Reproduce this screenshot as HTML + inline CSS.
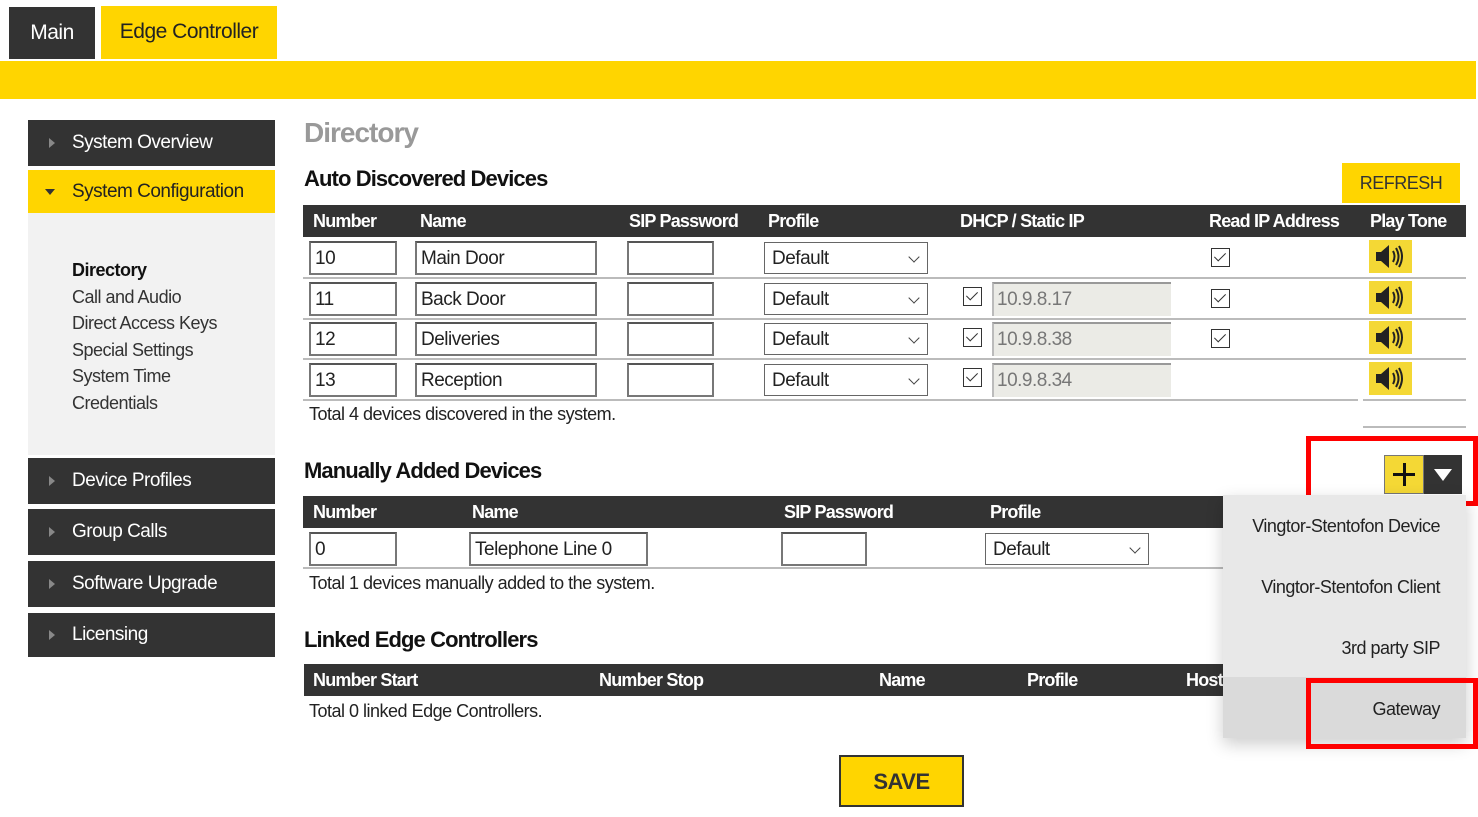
<!DOCTYPE html>
<html><head><meta charset="utf-8"><style>
*{margin:0;padding:0;box-sizing:border-box}
body{width:1478px;height:817px;background:#fff;position:relative;overflow:hidden;font-family:"Liberation Sans Narrow","Liberation Sans",sans-serif;color:#222;letter-spacing:-0.5px}
.a{position:absolute;white-space:nowrap}
.dk{background:#333;color:#fff}
.yl{background:#ffd500}
.nav{position:absolute;left:28px;width:247px;font-size:19px;padding-left:44px;display:flex;align-items:center}
.nav .tri{position:absolute;left:21px;top:50%;margin-top:-5px;border-left:6px solid #888;border-top:5px solid transparent;border-bottom:5px solid transparent}
.th{position:absolute;height:32px;background:#333;color:#fff;font-weight:bold;font-size:18px;letter-spacing:-0.8px}
.th span{position:absolute;top:6px}
.in{position:absolute;border:2px solid #777;border-top-color:#555;background:#fff;font-size:19px;padding-left:4px;line-height:31px;height:34px}
.sel{position:absolute;border:1px solid #666;height:32px;font-size:19px;padding-left:7px;line-height:32px;background:#fff}
.sel:after{content:"";position:absolute;right:9px;top:10px;width:7px;height:7px;border-right:1.5px solid #444;border-bottom:1.5px solid #444;transform:rotate(45deg)}
.cb{position:absolute;width:19px;height:19px;border:1.5px solid #333;background:#fff}
.cb:after{content:"";position:absolute;left:5px;top:1px;width:5px;height:10px;border-right:1.5px solid #333;border-bottom:1.5px solid #333;transform:rotate(45deg)}
.ip{position:absolute;width:179px;height:34px;background:#ebebe6;border-top:2px solid #999;border-left:2px solid #bbb;color:#777;font-size:19px;padding-left:3px;line-height:32px}
.sp{position:absolute;left:1369px;width:43px;height:33px;background:#f4d835}
.hl{position:absolute;height:2px;background:#bbb}
.txt{font-size:18px}
.h2{font-size:22px;font-weight:bold;color:#111;letter-spacing:-0.9px}
</style></head><body>
<div class="a dk" style="left:9px;top:7px;width:86px;height:52px;font-size:21px;text-align:center;line-height:52px">Main</div>
<div class="a yl" style="left:101px;top:6px;width:176px;height:53px;font-size:21px;text-align:center;line-height:52px">Edge Controller</div>
<div class="a yl" style="left:0;top:61px;width:1476px;height:38px"></div>

<div class="nav dk" style="top:120px;height:46px"><i class="tri"></i>System Overview</div>
<div class="nav yl" style="top:170px;height:43px"><i class="tri" style="border-left:5px solid transparent;border-right:5px solid transparent;border-top:6px solid #333;border-bottom:0;margin-top:-3px;left:17px"></i>System Configuration</div>
<div class="a" style="left:28px;top:213px;width:247px;height:242px;background:#f2f2f2"></div>
<div class="a" style="left:72px;top:257px;font-size:18px;line-height:26.5px;color:#333"><b style="color:#111">Directory</b><br>Call and Audio<br>Direct Access Keys<br>Special Settings<br>System Time<br>Credentials</div>
<div class="nav dk" style="top:458px;height:46px"><i class="tri"></i>Device Profiles</div>
<div class="nav dk" style="top:509px;height:46px"><i class="tri"></i>Group Calls</div>
<div class="nav dk" style="top:561px;height:46px"><i class="tri"></i>Software Upgrade</div>
<div class="nav dk" style="top:613px;height:44px"><i class="tri"></i>Licensing</div>

<div class="a" style="left:304px;top:117px;font-size:28px;font-weight:bold;color:#999;letter-spacing:-1px">Directory</div>
<div class="a h2" style="left:304px;top:166px">Auto Discovered Devices</div>
<div class="a yl" style="left:1342px;top:163px;width:118px;height:40px;font-size:18px;text-align:center;line-height:41px;color:#333">REFRESH</div>

<div class="th" style="left:303px;top:205px;width:1163px"><span style="left:10px">Number</span><span style="left:117px">Name</span><span style="left:326px">SIP Password</span><span style="left:465px">Profile</span><span style="left:657px">DHCP / Static IP</span><span style="left:906px">Read IP Address</span><span style="left:1067px">Play Tone</span></div>

<div class="in" style="left:309px;top:241px;width:88px">10</div><div class="in" style="left:415px;top:241px;width:182px">Main Door</div><div class="in" style="left:627px;top:241px;width:87px"></div><div class="sel" style="left:764px;top:242px;width:164px">Default</div><div class="cb" style="left:1211px;top:248px"></div>
<div class="hl" style="left:303px;top:277px;width:1163px"></div>
<div class="in" style="left:309px;top:282px;width:88px">11</div><div class="in" style="left:415px;top:282px;width:182px">Back Door</div><div class="in" style="left:627px;top:282px;width:87px"></div><div class="sel" style="left:764px;top:283px;width:164px">Default</div><div class="cb" style="left:963px;top:287px"></div><div class="ip" style="left:992px;top:282px">10.9.8.17</div><div class="cb" style="left:1211px;top:289px"></div>
<div class="hl" style="left:303px;top:318px;width:1163px"></div>
<div class="in" style="left:309px;top:322px;width:88px">12</div><div class="in" style="left:415px;top:322px;width:182px">Deliveries</div><div class="in" style="left:627px;top:322px;width:87px"></div><div class="sel" style="left:764px;top:323px;width:164px">Default</div><div class="cb" style="left:963px;top:328px"></div><div class="ip" style="left:992px;top:322px">10.9.8.38</div><div class="cb" style="left:1211px;top:329px"></div>
<div class="hl" style="left:303px;top:358px;width:1163px"></div>
<div class="in" style="left:309px;top:363px;width:88px">13</div><div class="in" style="left:415px;top:363px;width:182px">Reception</div><div class="in" style="left:627px;top:363px;width:87px"></div><div class="sel" style="left:764px;top:364px;width:164px">Default</div><div class="cb" style="left:963px;top:368px"></div><div class="ip" style="left:992px;top:363px">10.9.8.34</div>
<div class="hl" style="left:303px;top:399px;width:1055px"></div><div class="hl" style="left:1363px;top:399px;width:103px"></div>
<div class="hl" style="left:1363px;top:426px;width:103px"></div>

<svg class="sp" style="top:240px" viewBox="0 0 43 33"><path d="M7 12h5l8-7v23l-8-7H7z" fill="#222"/><path d="M24 11q3 5.5 0 11M27 8q5 8.5 0 17M30 6q6 10.5 0 21" stroke="#222" stroke-width="2" fill="none"/></svg>
<svg class="sp" style="top:281px" viewBox="0 0 43 33"><path d="M7 12h5l8-7v23l-8-7H7z" fill="#222"/><path d="M24 11q3 5.5 0 11M27 8q5 8.5 0 17M30 6q6 10.5 0 21" stroke="#222" stroke-width="2" fill="none"/></svg>
<svg class="sp" style="top:321px" viewBox="0 0 43 33"><path d="M7 12h5l8-7v23l-8-7H7z" fill="#222"/><path d="M24 11q3 5.5 0 11M27 8q5 8.5 0 17M30 6q6 10.5 0 21" stroke="#222" stroke-width="2" fill="none"/></svg>
<svg class="sp" style="top:362px" viewBox="0 0 43 33"><path d="M7 12h5l8-7v23l-8-7H7z" fill="#222"/><path d="M24 11q3 5.5 0 11M27 8q5 8.5 0 17M30 6q6 10.5 0 21" stroke="#222" stroke-width="2" fill="none"/></svg>

<div class="a txt" style="left:309px;top:404px">Total 4 devices discovered in the system.</div>

<div class="a h2" style="left:304px;top:458px">Manually Added Devices</div>
<div class="a" style="left:1384px;top:455px;width:40px;height:39px;background:#f4d835;border:1px solid #777"><div class="a" style="left:8px;top:17px;width:22px;height:3px;background:#111"></div><div class="a" style="left:18px;top:7px;width:3px;height:23px;background:#111"></div></div>
<div class="a dk" style="left:1424px;top:455px;width:38px;height:39px"><div class="a" style="left:10px;top:14px;border-left:9px solid transparent;border-right:9px solid transparent;border-top:12px solid #fff"></div></div>
<div class="a" style="left:1306px;top:436px;width:172px;height:70px;border:5px solid #f00"></div>

<div class="th" style="left:303px;top:496px;width:1163px"><span style="left:10px">Number</span><span style="left:169px">Name</span><span style="left:481px">SIP Password</span><span style="left:687px">Profile</span></div>
<div class="in" style="left:309px;top:532px;width:88px">0</div><div class="in" style="left:469px;top:532px;width:179px">Telephone Line 0</div><div class="in" style="left:781px;top:532px;width:86px"></div><div class="sel" style="left:985px;top:533px;width:164px">Default</div>
<div class="hl" style="left:303px;top:567px;width:930px"></div>
<div class="a txt" style="left:309px;top:573px">Total 1 devices manually added to the system.</div>

<div class="a h2" style="left:304px;top:627px">Linked Edge Controllers</div>
<div class="th" style="left:304px;top:664px;width:926px"><span style="left:9px">Number Start</span><span style="left:295px">Number Stop</span><span style="left:575px">Name</span><span style="left:723px">Profile</span><span style="left:882px">Host</span></div>
<div class="a txt" style="left:309px;top:701px">Total 0 linked Edge Controllers.</div>

<div class="a" style="left:1223px;top:495px;width:243px;height:243px;background:#e8e8e8;box-shadow:0 6px 16px rgba(0,0,0,.2);font-size:18px;color:#222">
<div class="a" style="right:26px;top:21px">Vingtor-Stentofon Device</div>
<div class="a" style="right:26px;top:82px">Vingtor-Stentofon Client</div>
<div class="a" style="right:26px;top:143px">3rd party SIP</div>
<div class="a" style="left:0;top:182px;width:243px;height:61px;background:#dadada"></div>
<div class="a" style="right:26px;top:204px">Gateway</div>
</div>
<div class="a" style="left:1306px;top:678px;width:172px;height:71px;border:5px solid #f00"></div>

<div class="a yl" style="left:839px;top:755px;width:125px;height:52px;border:2px solid #333;font-size:22px;font-weight:bold;text-align:center;line-height:50px;color:#333">SAVE</div>
</body></html>
